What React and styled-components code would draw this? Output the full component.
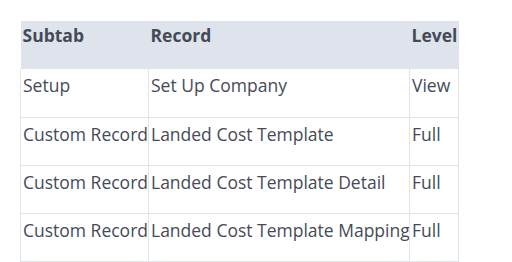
import styled, { createGlobalStyle } from "styled-components";

const GlobalStyle = createGlobalStyle`
  body {
    margin: 0;
    background: #ffffff;
    font-family: "Open Sans", "Noto Sans", sans-serif;
  }
`;

const rows = [
  { subtab: "Setup", record: "Set Up Company", level: "View" },
  { subtab: "Custom Record", record: "Landed Cost Template", level: "Full" },
  { subtab: "Custom Record", record: "Landed Cost Template Detail", level: "Full" },
  { subtab: "Custom Record", record: "Landed Cost Template Mapping", level: "Full" },
];

const App = () => (
  <>
    <GlobalStyle />
    <Page>
      <Table>
        <colgroup>
          <col style={{ width: 128 }} />
          <col style={{ width: 261 }} />
          <col style={{ width: 49 }} />
        </colgroup>
        <thead>
          <tr>
            <HeadCell>Subtab</HeadCell>
            <HeadCell>Record</HeadCell>
            <HeadCell>Level</HeadCell>
          </tr>
        </thead>
        <tbody>
          {rows.map((row, i) => (
            <tr key={i}>
              <Cell>{row.subtab}</Cell>
              <Cell>{row.record}</Cell>
              <Cell>{row.level}</Cell>
            </tr>
          ))}
        </tbody>
      </Table>
    </Page>
  </>
);

export default App;

const Page = styled.div`
  padding: 21px 0 0 20px;
`;

const Table = styled.table`
  border-collapse: collapse;
  table-layout: fixed;
  width: 438px;
  color: #454a57;
  font-size: 17.5px;
  line-height: 24px;
`;

const HeadCell = styled.th`
  height: 48px;
  box-sizing: border-box;
  padding: 2px 1px 0 2px;
  background: #dfe4ec;
  text-align: left;
  vertical-align: top;
  font-weight: 700;
  white-space: nowrap;
  overflow: hidden;
`;

const Cell = styled.td`
  height: 48px;
  box-sizing: border-box;
  padding: 4px 1px 0 2px;
  border: 1px solid #dfe4ec;
  border-top: none;
  vertical-align: top;
  white-space: nowrap;
  overflow: hidden;
`;
